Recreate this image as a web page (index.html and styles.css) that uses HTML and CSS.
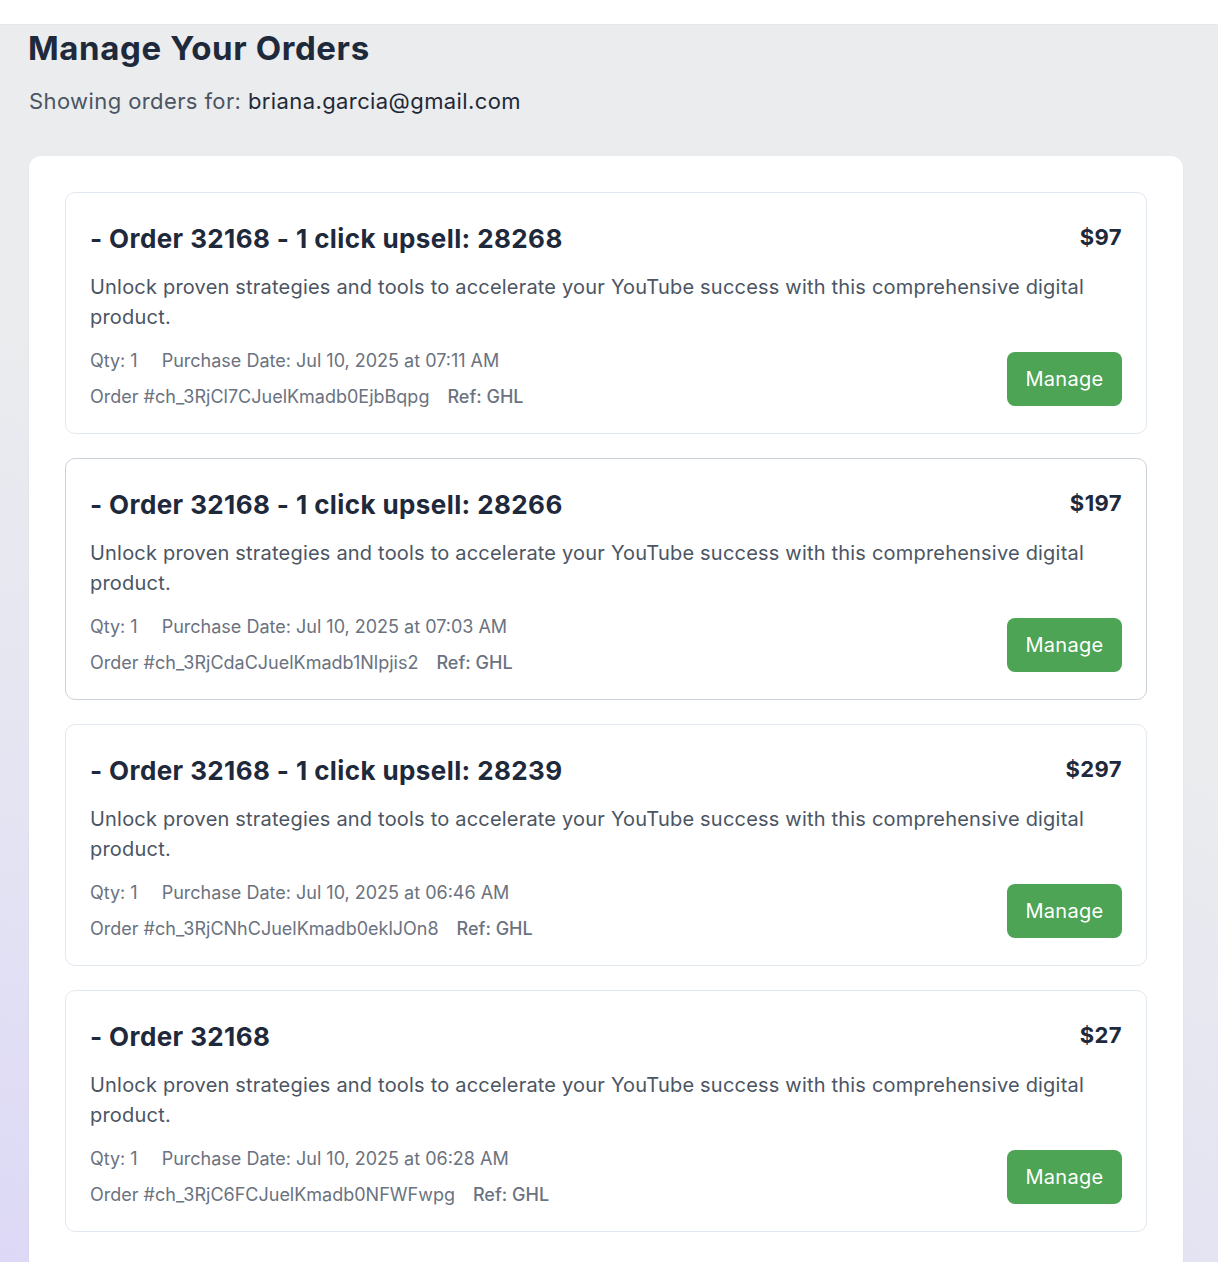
FILE: index.html
```html
<!DOCTYPE html>
<html lang="en">
<head>
<meta charset="utf-8">
<title>Manage Your Orders</title>
<link rel="stylesheet" href="styles.css">
</head>
<body>
<div class="topbar"></div>
<main class="page">
  <h1 class="page-title">Manage Your Orders</h1>
  <p class="page-sub">Showing orders for: <span class="email">briana.garcia@gmail.com</span></p>
  <section class="panel">
    <article class="order">
      <div class="order-head">
        <h2 class="order-title">- Order 32168 - 1 click upsell: 28268</h2>
        <div class="price">$97</div>
      </div>
      <p class="desc">Unlock proven strategies and tools to accelerate your YouTube success with this comprehensive digital product.</p>
      <div class="order-foot">
        <div class="meta">
          <div class="meta-row meta-top"><span>Qty: 1</span><span>Purchase Date: Jul 10, 2025 at 07:11 AM</span></div>
          <div class="meta-row"><span>Order #ch_3RjCl7CJuelKmadb0EjbBqpg</span><span class="ref">Ref: GHL</span></div>
        </div>
        <button class="btn">Manage</button>
      </div>
    </article>
    <article class="order order-hover">
      <div class="order-head">
        <h2 class="order-title">- Order 32168 - 1 click upsell: 28266</h2>
        <div class="price">$197</div>
      </div>
      <p class="desc">Unlock proven strategies and tools to accelerate your YouTube success with this comprehensive digital product.</p>
      <div class="order-foot">
        <div class="meta">
          <div class="meta-row meta-top"><span>Qty: 1</span><span>Purchase Date: Jul 10, 2025 at 07:03 AM</span></div>
          <div class="meta-row"><span>Order #ch_3RjCdaCJuelKmadb1Nlpjis2</span><span class="ref">Ref: GHL</span></div>
        </div>
        <button class="btn">Manage</button>
      </div>
    </article>
    <article class="order">
      <div class="order-head">
        <h2 class="order-title">- Order 32168 - 1 click upsell: 28239</h2>
        <div class="price">$297</div>
      </div>
      <p class="desc">Unlock proven strategies and tools to accelerate your YouTube success with this comprehensive digital product.</p>
      <div class="order-foot">
        <div class="meta">
          <div class="meta-row meta-top"><span>Qty: 1</span><span>Purchase Date: Jul 10, 2025 at 06:46 AM</span></div>
          <div class="meta-row"><span>Order #ch_3RjCNhCJuelKmadb0eklJOn8</span><span class="ref">Ref: GHL</span></div>
        </div>
        <button class="btn">Manage</button>
      </div>
    </article>
    <article class="order">
      <div class="order-head">
        <h2 class="order-title">- Order 32168</h2>
        <div class="price">$27</div>
      </div>
      <p class="desc">Unlock proven strategies and tools to accelerate your YouTube success with this comprehensive digital product.</p>
      <div class="order-foot">
        <div class="meta">
          <div class="meta-row meta-top"><span>Qty: 1</span><span>Purchase Date: Jul 10, 2025 at 06:28 AM</span></div>
          <div class="meta-row"><span>Order #ch_3RjC6FCJuelKmadb0NFWFwpg</span><span class="ref">Ref: GHL</span></div>
        </div>
        <button class="btn">Manage</button>
      </div>
    </article>
  </section>
</main>
</body>
</html>
```

FILE: styles.css
```css
* { box-sizing: border-box; }
html, body { margin: 0; padding: 0; }
body {
  font-family: Inter, "Noto Sans", "Liberation Sans", sans-serif;
  background: linear-gradient(20deg, #dcd8f6 0%, #e4e3f3 25%, #eaecee 55%, #eaecee 100%);
  min-height: 1262px;
  color: #1f2937;
  overflow: hidden;
}
.topbar {
  height: 25px;
  background: #ffffff;
  border-bottom: 1px solid #e5e7eb;
}
.page {
  padding: 0 35px 0 29px;
}
.page-title {
  margin: 3px 0 0 -1px;
  font-size: 33px;
  line-height: 40px;
  font-weight: 700;
  color: #1e293b;
  letter-spacing: 0.6px;
}
.page-sub {
  margin: 18px 0 0;
  font-size: 22px;
  line-height: 30px;
  color: #4b5563;
  letter-spacing: 0.4px;
}
.email { color: #1f2937; }
.panel {
  margin-top: 40px;
  background: #ffffff;
  border-radius: 12px;
  padding: 36px 36px 40px;
  display: flex;
  flex-direction: column;
  gap: 24px;
  box-shadow: 0 1px 3px rgba(0,0,0,0.04);
}
.order {
  border: 1px solid #e2e8f0;
  border-radius: 10px;
  padding: 24px 24px 23px 24px;
}
.order-hover { border-color: #cbd2da; }
.order-head {
  display: flex;
  justify-content: space-between;
  align-items: flex-start;
}
.order-title {
  margin: 2px 0 0;
  font-size: 26px;
  line-height: 40px;
  font-weight: 700;
  color: #1e293b;
  letter-spacing: 0.4px;
}
.price {
  font-size: 22px;
  line-height: 40px;
  font-weight: 700;
  color: #1e293b;
  letter-spacing: 0.4px;
}
.desc {
  margin: 13px 0 0;
  font-size: 20px;
  line-height: 30px;
  color: #4b5563;
  letter-spacing: 0.2px;
}
.order-foot {
  margin-top: 15px;
  display: flex;
  justify-content: space-between;
  align-items: center;
}
.meta {
  display: flex;
  flex-direction: column;
  gap: 9px;
}
.meta-row {
  display: flex;
  gap: 18px;
  font-size: 18px;
  line-height: 27px;
  color: #6b7280;
}
.meta-top { gap: 24px; }
.ref { font-weight: 500; color: #6b7280; }
.btn {
  font-family: inherit;
  background: #4ca454;
  color: #ffffff;
  border: 0;
  border-radius: 8px;
  width: 115px;
  height: 54px;
  font-size: 20px;
  letter-spacing: 0.3px;
  cursor: pointer;
}
```
